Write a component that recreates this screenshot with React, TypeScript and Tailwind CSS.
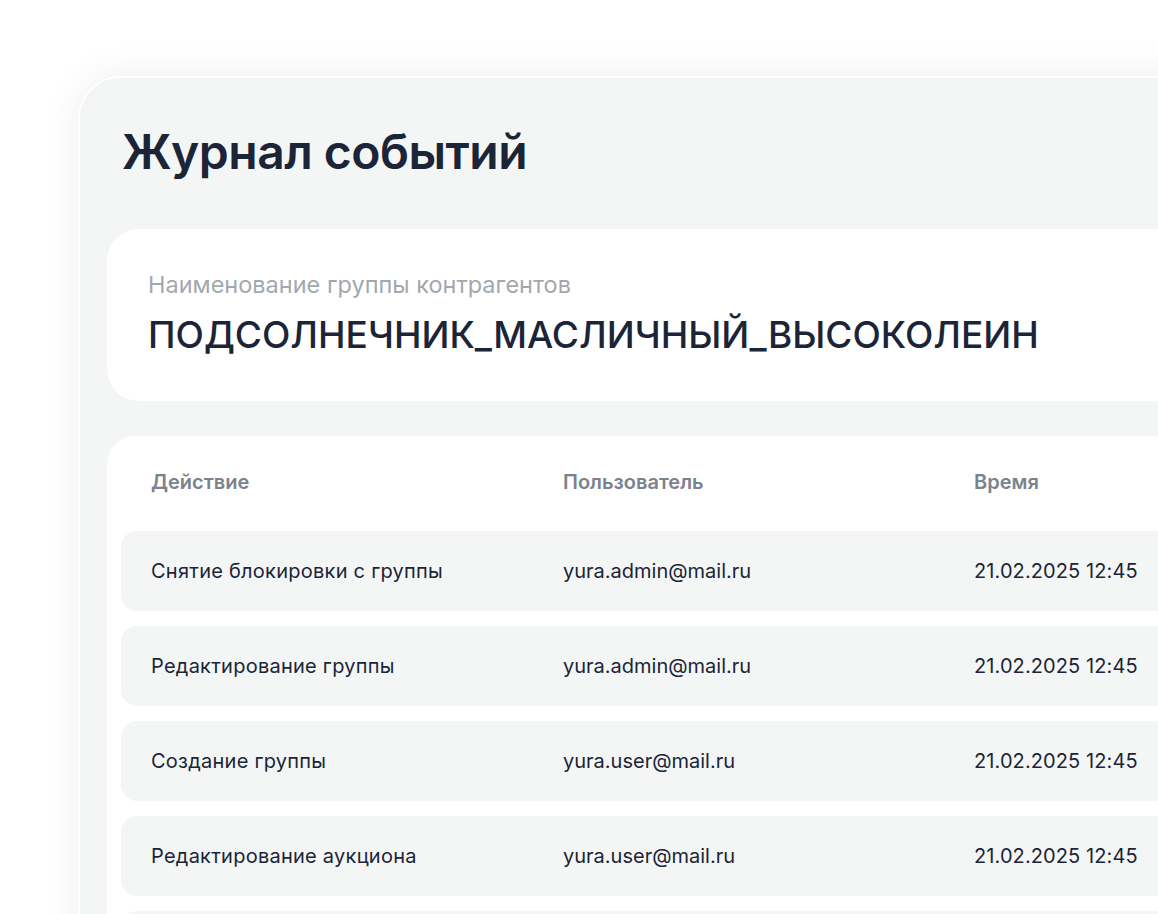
const rows = [
  { action: 'Снятие блокировки с группы', user: 'yura.admin@mail.ru', time: '21.02.2025 12:45' },
  { action: 'Редактирование группы', user: 'yura.admin@mail.ru', time: '21.02.2025 12:45' },
  { action: 'Создание группы', user: 'yura.user@mail.ru', time: '21.02.2025 12:45' },
  { action: 'Редактирование аукциона', user: 'yura.user@mail.ru', time: '21.02.2025 12:45' },
]

export default function App() {
  return (
    <div
      className="w-[1158px] h-[914px] overflow-hidden bg-white"
      style={{ fontFamily: 'Inter, "Noto Sans", sans-serif' }}
    >
      {/* Outer card */}
      <div className="ml-[78px] mt-[76px] w-[1200px] h-[1000px] rounded-tl-[42px] border-2 border-white bg-[#f4f6f6] shadow-[0_0_40px_rgba(20,30,40,0.07)]">
        <h1 className="pl-[42px] pt-[45px] text-[48px] leading-[58px] font-semibold text-[#1b2537] tracking-[-0.5px]">
          Журнал событий
        </h1>

        {/* Group name */}
        <div className="ml-[27px] mt-[48px] rounded-l-[32px] bg-white pl-[41px] pt-[42px] pb-[44px]">
          <div className="text-[23.5px] leading-[28px] text-[#a3a8ae]">
            Наименование группы контрагентов
          </div>
          <div className="mt-[14px] text-[37px] leading-[44px] font-medium text-[#1b2537]">
            ПОДСОЛНЕЧНИК_МАСЛИЧНЫЙ_ВЫСОКОЛЕИН
          </div>
        </div>

        {/* Events table */}
        <div className="ml-[27px] mt-[35px] rounded-l-[28px] bg-white pl-[14px] pt-[34px] pb-6">
          <div className="grid grid-cols-[412px_411px_1fr] pl-[30px] text-[20px] leading-[24px] font-semibold text-[#7b828c]">
            <div>Действие</div>
            <div>Пользователь</div>
            <div>Время</div>
          </div>
          <div className="mt-[37px] flex flex-col gap-[15px]">
            {rows.map((r, i) => (
              <div
                key={i}
                className="grid h-[80px] grid-cols-[412px_411px_1fr] items-center rounded-l-[16px] bg-[#f4f6f6] pl-[30px] text-[20px] leading-[24px] text-[#1b2537]"
              >
                <div className="tracking-[0.25px]">{r.action}</div>
                <div>{r.user}</div>
                <div className="tracking-[0.1px]">{r.time}</div>
              </div>
            ))}
            <div className="h-[80px] rounded-l-[16px] bg-[#f4f6f6]" />
          </div>
        </div>
      </div>
    </div>
  )
}
